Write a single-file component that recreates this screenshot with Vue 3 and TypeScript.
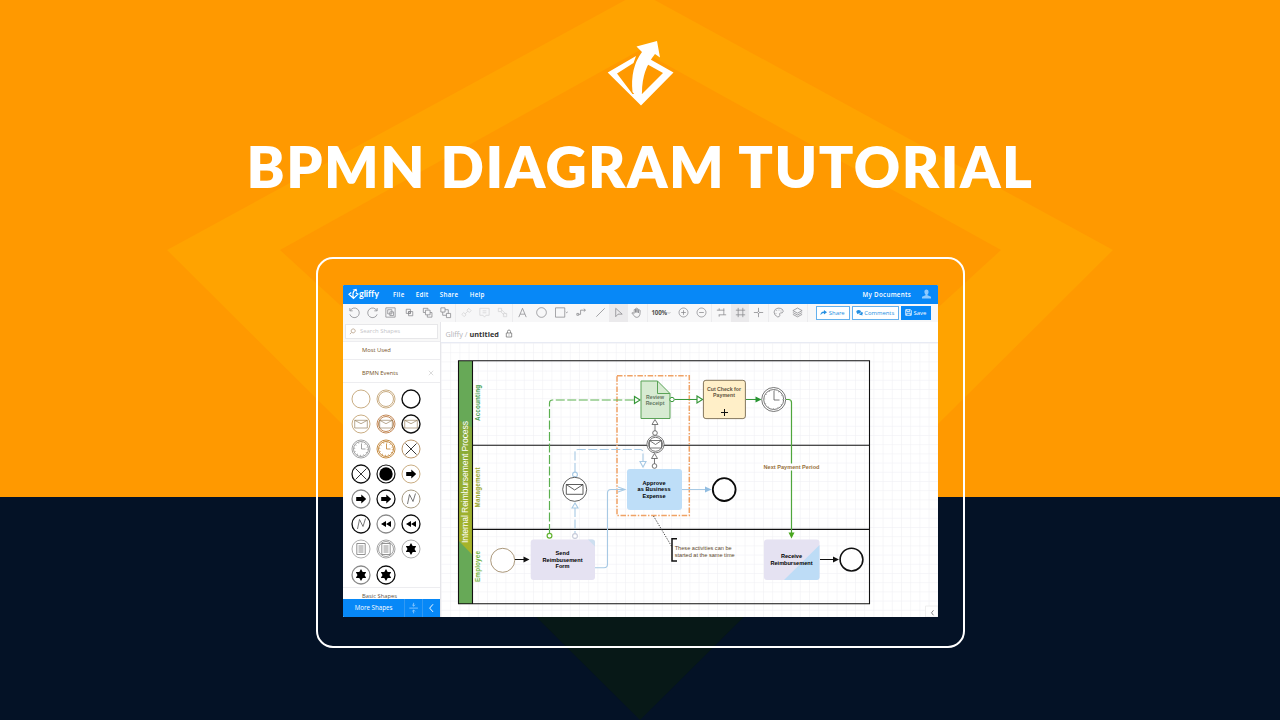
<script setup lang="ts">
interface Tool {
  name: string;
  path?: string;
  width?: number;
  faded?: boolean;
  active?: boolean;
  separator?: boolean;
  label?: string;
}

interface BpmnEvent {
  kind: string;
  color: string;
  weight: number;
  double?: boolean;
}

const menus = ['File', 'Edit', 'Share', 'Help']

const tools: Tool[] = [
  { name: 'undo', path: 'M2 2.200v3h3M2.300 5A5.200 5.200 0 1 1 2 9' },
  { name: 'redo', path: 'M12 2.200v3h-3M11.700 5A5.200 5.200 0 1 0 12 9' },
  { name: 'select', path: 'M2 2h10v10H2zM4 4h4.500v4.500H4zM6.300 6.300h4v4h-4z' },
  { name: 'group', path: 'M3.500 3.500h4.500v4.500H3.500zM6 6h4.500v4.500H6zM6 6h2v2H6z' },
  { name: 'front', path: 'M4.500 7H2.500V2.500h5V4M4.800 4.500h5v5h-5zM9.800 7h2v5h-5V9.500' },
  { name: 'back', path: 'M2 2h4.500v4.500H2zM8 8h4.500v4.500H8zM6.500 4h3.500v4M4 6.500v3.500H8' },
  { name: 'sep1', separator: true },
  { name: 'link', path: 'M2 9l2-2 2.500 2.500-2 2zM7.500 4.500l2-2L12 5l-2 2zM5.500 8.500l3-3', faded: true },
  { name: 'note', path: 'M2 2.500h10v7.500H8.500L7 12 5.500 10H2zM5 5.200h4M5 7.300h4', faded: true },
  { name: 'unlink', path: 'M2.500 2.500h3.500v3.500H2.500zM8 8h3.500v3.500H8zM5 6l4 4M6 4l5 5', faded: true },
  { name: 'sep2', separator: true },
  { name: 'text', path: 'M3 12L7 2.500 11 12M4.500 8.800h5', width: 18.4 },
  { name: 'ellipse', path: 'M7 1.800a5.200 5.200 0 1 0 .01 0z', width: 18.4 },
  { name: 'rect', path: 'M.5 2h10v10H.5zM11.700 6.300l1 1 1-1', width: 22 },
  { name: 'connector', path: 'M4 9h2V4.500h5M9.500 3l1.800 1.500L9.500 6M2 8h2v2H2z', width: 18.4 },
  { name: 'line', path: 'M2.500 11.500l9-9', width: 18.4 },
  { name: 'pointer', path: 'M4 2.500v9l2.500-2.700h4.500z', width: 18.4, active: true },
  { name: 'hand', path: 'M4.500 8V4q1-1 1.500 0v3V2.800q1-1 1.500 0V7 3.300q1-1 1.500 0V7.500l.500-3q1-.6 1.500.2L10.700 9Q10 12.300 7.500 12.300 5 12.300 4 10L2 7.500q.8-1 2.500.5' },
  { name: 'sep3', separator: true },
  { name: 'zoom', label: '100%', width: 26 },
  { name: 'zoom-in', path: 'M7 2.200a4.800 4.800 0 1 0 .01 0zM4.500 7h5M7 4.500v5' },
  { name: 'zoom-out', path: 'M7 2.200a4.800 4.800 0 1 0 .01 0zM4.500 7h5' },
  { name: 'sep4', separator: true },
  { name: 'guides', path: 'M2 4.500h8M4 9.500h8M4.500 2.500v2M9.500 2.500v7M4.500 9.500v2' },
  { name: 'grid', path: 'M2 4.500h10M2 9.500h10M4.500 2v10M9.500 2v10', active: true },
  { name: 'snap', path: 'M7 2v3.700M7 8.300V12M2 7h3.700M8.300 7H12M7 5.900a1.100 1.100 0 1 0 .01 0z' },
  { name: 'sep5', separator: true },
  { name: 'theme', path: 'M6.500 2.300Q12 2.300 12 6 11.500 8 9 7.500 7.500 8 8.500 10 8 12.200 6 11.700 2.200 10 2.200 6.500 2.800 2.800 6.500 2.300zM5 4.500v.8M7.500 4v.8M9.700 5v.8M4.300 7.500v.8' },
  { name: 'layers', path: 'M7 2.200L12 5 7 7.700 2 5zM2 7l5 2.700L12 7M2 9l5 2.700L12 9' },
  { name: 'sep6', separator: true },
]

const tan = '#b28a4e'
const gray = '#8b8b8b'
const black = '#111'

const events: BpmnEvent[] = [
  { kind: 'none', color: tan, weight: 0.7 },
  { kind: 'none', color: tan, weight: 0.7, double: true },
  { kind: 'none', color: black, weight: 1.4 },
  { kind: 'message', color: tan, weight: 0.7 },
  { kind: 'message', color: '#bd7d45', weight: 0.9, double: true },
  { kind: 'message', color: black, weight: 1.4 },
  { kind: 'timer', color: gray, weight: 0.8, double: true },
  { kind: 'timer', color: '#c0802f', weight: 0.9, double: true },
  { kind: 'cancel', color: '#a87c46', weight: 0.8 },
  { kind: 'cancel', color: black, weight: 1.3 },
  { kind: 'terminate', color: black, weight: 1.2 },
  { kind: 'link', color: tan, weight: 0.7 },
  { kind: 'link', color: gray, weight: 1.3 },
  { kind: 'link', color: black, weight: 1.3 },
  { kind: 'error', color: '#a79b82', weight: 1 },
  { kind: 'error', color: black, weight: 1.3 },
  { kind: 'rewind', color: gray, weight: 1.3 },
  { kind: 'rewind', color: black, weight: 1.3 },
  { kind: 'rule', color: gray, weight: 0.7 },
  { kind: 'rule', color: gray, weight: 0.8, double: true },
  { kind: 'multiple', color: gray, weight: 0.7 },
  { kind: 'multiple', color: gray, weight: 1.3 },
  { kind: 'multiple', color: black, weight: 1.3 },
]
</script>

<template>
  <main class="cover">
    <svg class="backdrop" viewBox="0 0 1280 720">
      <rect width="1280" height="720" fill="#ff9900" />
      <path d="M167 250L640-8l473 258-473 470zM280 250l360 330 361-330L640 50z" fill="#ffa300" fill-rule="evenodd" />
      <rect y="497" width="1280" height="223" fill="#041226" />
      <path d="M510 591h260L640 720z" fill="#071817" />
    </svg>

    <svg class="brand" viewBox="0 0 67 66">
      <path d="M29 16L.7 32.500 34 65.500 66.500 32.500 40 17.500l-2 5.500 18 10-21 21h-9.500L10 33.500 26.500 23z" fill="#fff" />
      <path d="M25.500 52Q23 28 35 12L29.500 6.500 50 1l3 16.500-5-3.500Q35 30 35 52l-1 10z" fill="#fff" />
    </svg>
    <h1>BPMN DIAGRAM TUTORIAL</h1>

    <div class="frame">
      <div class="app">
        <header class="menubar">
          <svg class="menu-logo" viewBox="0 0 11 12">
            <path d="M3.200 4.500L1 6.200l4.500 4.300L10 6.200 7.800 4.800M5.500 10Q4 5 6.500 2.500" />
            <path d="M4.500 1.800L8.500.8l.7 3z" class="solid" />
          </svg>
          <span class="wordmark">gliffy</span>
          <nav>
            <span v-for="menu in menus" :key="menu">{{ menu }}</span>
          </nav>
          <span class="documents">My Documents</span>
          <svg class="user" viewBox="0 0 10 10">
            <path d="M5 .5q2.300 0 2.100 2.500Q7 4.800 6 5.500v.8l3.500 1.500V9.500H.5V7.800L4 6.300v-.8Q3 4.800 2.900 3 2.700.5 5 .5z" />
          </svg>
        </header>

        <div class="toolbar">
          <template v-for="tool in tools" :key="tool.name">
            <i v-if="tool.separator" class="separator" />
            <span
              v-else
              class="tool"
              :class="{ faded: tool.faded, active: tool.active }"
              :style="{ width: `${tool.width ?? 18.2}px` }"
            >
              <template v-if="tool.label">
                <b>{{ tool.label }}</b>
                <svg class="caret" viewBox="0 0 4 4"><path d="M.5 1L2 2.500 3.500 1" /></svg>
              </template>
              <svg v-else class="tool-icon" viewBox="0 0 14 14"><path :d="tool.path" /></svg>
            </span>
          </template>
          <div class="actions">
            <span class="button share">
              <svg viewBox="0 0 8 8"><path d="M.5 7Q.5 3 4.500 2.800V1L8 3.800 4.500 6.200V4.600Q2 4.600.5 7z" /></svg>
              Share
            </span>
            <span class="button comments">
              <svg viewBox="0 0 8 8"><path d="M3 1q2.700 0 2.700 2T3 5L1 6l.5-1.500Q.2 4 .3 3 .4 1 3 1zM6.300 3.200Q8 3.600 7.800 5q-.1.8-.7 1.200L7.500 7.500 5.800 6.800Q4 6.900 3.500 5.800 6.300 5.500 6.300 3.200z" /></svg>
              Comments
            </span>
            <span class="button save">
              <svg viewBox="0 0 8 8"><path d="M.8.8h5.400l1 1v5.400H.8zM2 .8v2h3.500v-2M2 7V4.800h4V7" fill="none" stroke="currentColor" stroke-width=".9" /></svg>
              Save
            </span>
          </div>
        </div>

        <div class="workspace">
          <aside class="sidebar">
            <div class="search">
              <div class="search-box">
                <svg viewBox="0 0 8 8"><path d="M4.800 1a2.300 2.300 0 1 0 .01 0zM3 5L1 7" /></svg>
                Search Shapes
              </div>
            </div>
            <div class="section">Most Used</div>
            <div class="section second">
              BPMN Events
              <svg viewBox="0 0 6 6"><path d="M.8.8l4.400 4.400M5.200.8L.8 5.200" /></svg>
            </div>
            <div class="palette">
              <svg v-for="(event, index) in events" :key="index" viewBox="-10 -10 20 20">
                <circle r="9" fill="#fff" :stroke="event.color" :stroke-width="event.weight" />
                <circle v-if="event.double" r="7.500" fill="none" :stroke="event.color" :stroke-width="event.weight" />
                <g v-if="event.kind === 'message'" fill="none" stroke="#8a7048" stroke-width=".6">
                  <path d="M-6.300-3.700H6.300V4H-6.300zM-6.300-3.700L0-.3l6.300-3.400" />
                </g>
                <g v-else-if="event.kind === 'timer'" fill="none" :stroke="event.color" stroke-width=".8">
                  <path d="M.5-5.500V0H4.500" />
                  <circle r="6.400" stroke-width="1.200" stroke-dasharray=".6 2.750" />
                </g>
                <path v-else-if="event.kind === 'cancel'" d="M-5.500-5.500l11 11M5.500-5.500l-11 11" stroke="#222" stroke-width=".9" />
                <circle v-else-if="event.kind === 'terminate'" r="6.700" fill="#000" />
                <path v-else-if="event.kind === 'link'" d="M-4.800-2H.3V-4.500L5.200 0 .3 4.500V2h-5.100z" fill="#000" />
                <path v-else-if="event.kind === 'error'" d="M-3.500 5L-1.500-4.500 2 2.500 4.500-5.500" fill="none" stroke="#555" stroke-width=".8" />
                <path v-else-if="event.kind === 'rewind'" d="M-5 0l5-3v6zM0 0l5-3v6z" fill="#000" />
                <path v-else-if="event.kind === 'rule'" d="M-4.200-5.500h8.400v11h-8.400zM-2.500-3h5M-2.500-1h5M-2.500 1h5M-2.500 3h5" fill="none" stroke="#777" stroke-width=".8" />
                <path v-else-if="event.kind === 'multiple'" d="M0-6l1.700 3H5.200L3.500 0l1.700 3H1.700L0 6l-1.700-3h-3.500L-3.500 0l-1.700-3h3.500z" fill="#000" />
              </svg>
            </div>
            <div class="section cropped">Basic Shapes</div>
            <div class="more">
              <span class="more-label">More Shapes</span>
              <svg class="more-split" viewBox="0 0 18 18"><path d="M4.500 9h9M9 3.500V7M9 11v3.500M7.500 5.500L9 7l1.500-1.500M7.500 12.500L9 11l1.500 1.500" /></svg>
              <svg class="more-close" viewBox="0 0 18 18"><path d="M10.500 5L7 9l3.500 4" /></svg>
            </div>
          </aside>

          <section class="document">
            <div class="doc-title">
              <span>Gliffy /</span>
              <b>untitled</b>
              <svg viewBox="0 0 8 9"><path d="M1.300 4h5.400v4H1.300zM2.500 4V2.500Q2.500 1 4 1t1.500 1.500V4M4 5.500v1" /></svg>
            </div>

            <svg class="canvas" viewBox="441 343 497 274">
              <defs>
                <pattern id="grid" width="9.200" height="9.200" x="441" y="343" patternUnits="userSpaceOnUse">
                  <path d="M0 0v9.200M0 0h9.200" stroke="#eeeef3" stroke-width="1" />
                </pattern>
                <linearGradient id="lane" x1="0" y1="0" x2="0" y2="1">
                  <stop offset="0" stop-color="#83a93d" />
                  <stop offset="1" stop-color="#a9b428" />
                </linearGradient>
              </defs>
              <rect x="441" y="343" width="497" height="274" fill="url(#grid)" />

              <!-- pool and lanes -->
              <rect x="459" y="361" width="13.500" height="243" fill="#67a957" />
              <path d="M459 420l13.500 8v127L459 541z" fill="url(#lane)" />
              <g fill="none" stroke="#111" stroke-width="1.100">
                <path d="M458.500 360.700h411v243.100h-411zM472.500 360.700v243.100M472.500 445.300h397M472.500 529.400h397" />
              </g>
              <text class="pool" transform="translate(467.500 482) rotate(-90)" textLength="122">Internal Reimbursement Process</text>
              <g class="lane">
                <text transform="translate(479.500 403) rotate(-90)" textLength="36" fill="#46a052">Accounting</text>
                <text transform="translate(479.500 487.500) rotate(-90)" textLength="40" fill="#9ba82f">Management</text>
                <text transform="translate(479.500 566.500) rotate(-90)" textLength="31" fill="#72b43b">Employee</text>
              </g>

              <!-- group around the review steps -->
              <rect x="617" y="375.700" width="72.300" height="139.800" fill="none" stroke="#f0a265" stroke-width="1.500" stroke-dasharray="5.500 1.600 1.500 1.600" />

              <!-- green flow -->
              <g fill="none" stroke="#38983a" stroke-width="1.200">
                <path d="M549.500 533V403q0-3 3-3H634" stroke="#5bb04f" stroke-dasharray="9 2.500" />
                <path d="M634.500 396.500l5.500 3.500-5.500 3.500z" fill="#fff" />
                <circle cx="549.500" cy="535.800" r="2.400" stroke="#62b32f" fill="#fff" />
                <path d="M674.500 399.500H697M746 399.500h11" />
                <path d="M697 396l5.500 3.500-5.500 3.500z" fill="#fff" />
                <path d="M786 399.500h2.500q3 0 3 3V534" stroke="#4fa63c" />
              </g>
              <path d="M755.500 396.500l6 3-6 3z" fill="#279431" />
              <path d="M788.500 532.500h6l-3 6z" fill="#4aa71f" />

              <!-- blue flow -->
              <g fill="none" stroke="#a7c9e4" stroke-width="1.100">
                <path d="M575 472v-19.500q0-3 3-3h62q3 0 3 3V461M575 508v25" stroke-dasharray="9 2.500" />
                <path d="M640 461.500h6l-3 5.500zM575 503l-3 5h6z" fill="#fff" />
                <circle cx="575" cy="474.500" r="2.400" fill="#fff" />
                <circle cx="575" cy="536" r="2.400" stroke="#c5c9d8" fill="#fff" />
                <path d="M595 567.700h9q3.500 0 3.500-3.500V493q0-3.500 3.500-3.500h14M682 489.500h24" />
                <path d="M618 487l7 2.500-7 2.500" />
              </g>
              <path d="M705 486.500l6.500 3-6.500 3z" fill="#91bde1" />

              <!-- nodes -->
              <path d="M641 381h16.500l12.500 12.500v25H641z" fill="#d7ebd2" stroke="#5aa357" />
              <path d="M657.500 381v12.500H670" fill="none" stroke="#5aa357" />
              <circle cx="672" cy="399.500" r="2.200" fill="#fff" stroke="#38983a" />
              <rect x="703.400" y="380.300" width="42" height="38.300" rx="2.500" fill="#ffefc8" stroke="#65553a" stroke-width=".8" />
              <path d="M724.500 409v7M721 412.500h7" stroke="#111" stroke-width="1" />
              <rect x="627" y="469" width="55" height="41" rx="3" fill="#bedef8" />
              <rect x="530.700" y="539.500" width="64.300" height="40.500" rx="3" fill="#e5e2f2" />
              <path d="M588 539.500h4q3 0 3 3v4z" fill="#cddff0" />
              <rect x="764" y="539.500" width="55.500" height="40.500" rx="3" fill="#e5e2f2" />
              <path d="M784 580l35.500-35v32q0 3-3 3z" fill="#bddcf6" />

              <g fill="#fff" stroke="#555" stroke-width=".8">
                <circle cx="773.700" cy="399.500" r="12" />
                <circle cx="773.700" cy="399.500" r="10" />
                <circle cx="773.700" cy="399.500" r="9" stroke-dasharray=".7 4" />
                <path d="M774 391v9h5.500" fill="none" />
                <path d="M655 431v-6M654.500 464v-6" />
                <path d="M655 419.500l-3 5h6zM654.500 453.500l-3 5h6z" />
                <circle cx="655" cy="433" r="2.300" />
                <circle cx="654.500" cy="466" r="2.300" />
                <circle cx="655.500" cy="444.300" r="8.600" />
                <circle cx="655.500" cy="444.300" r="7" />
                <path d="M649.500 440.500h12v7.500h-12zM649.500 440.500l6 4 6-4" />
                <circle cx="574.700" cy="489.300" r="12" stroke="#333" />
                <path d="M566.300 484.500H583v9.800h-16.700zM566.300 484.500l8.350 5.500 8.350-5.500" stroke="#333" />
                <circle cx="502.700" cy="560.300" r="12" stroke="#947c58" />
                <circle cx="724.200" cy="489.600" r="11.400" stroke="#0a0a0a" stroke-width="1.800" />
                <circle cx="851.500" cy="559.600" r="11.400" stroke="#111" stroke-width="1.600" />
              </g>
              <path d="M515 559.500h10M820 559.500h14" stroke="#111" stroke-width="1.100" />
              <path d="M523.500 556.500l6 3-6 3zM833 556.500l6 3-6 3z" fill="#111" />

              <!-- annotation -->
              <path d="M653.500 516l18.500 31" stroke="#333" stroke-width=".9" stroke-dasharray="1.300 1.300" />
              <path d="M677 538.800h-5v22.300h5" fill="none" stroke="#111" stroke-width="1.500" />

              <g class="node-text">
                <text x="655" y="399" class="muted">Review</text>
                <text x="655" y="405.200" class="muted">Receipt</text>
                <text x="724" y="391" class="brown" textLength="34">Cut Check for</text>
                <text x="724" y="397" class="brown" textLength="22">Payment</text>
                <text x="654" y="485" textLength="23">Approve</text>
                <text x="654" y="491.300" textLength="33">as Business</text>
                <text x="654" y="497.800" textLength="23">Expense</text>
                <text x="562.500" y="555" textLength="14">Send</text>
                <text x="562.500" y="561.500" textLength="40">Reimbusement</text>
                <text x="562.500" y="568" textLength="14">Form</text>
                <text x="791.500" y="558.200" textLength="21">Receive</text>
                <text x="791.500" y="564.700" textLength="42">Reimbursement</text>
                <rect x="763" y="463.500" width="57" height="7" fill="#fff" />
                <text x="791.500" y="469" class="period" textLength="56">Next Payment Period</text>
              </g>
              <g class="note">
                <text x="674.700" y="550" textLength="57">These activities can be</text>
                <text x="674.700" y="556.500" textLength="60">started at the same time</text>
              </g>
              <path d="M925.500 617v-11H938v11z" fill="#fff" stroke="#eee" />
              <path d="M933.500 610.300l-2 2.500 2 2.500" fill="none" stroke="#666" stroke-width=".8" />
            </svg>
          </section>
        </div>
      </div>
    </div>
  </main>
</template>

<style>
body {
  overflow: hidden;
}
</style>

<style scoped>
.cover {
  position: relative;
  display: flex;
  flex-direction: column;
  align-items: center;
  width: 1280px;
  height: 720px;
  padding-top: 40px;
  box-sizing: border-box;
  overflow: hidden;
  font-family: "Open Sans", sans-serif;
}

.backdrop {
  position: absolute;
  inset: 0;
  width: 1280px;
  height: 720px;
}

.brand {
  position: relative;
  width: 67px;
  height: 66px;
}

h1 {
  position: relative;
  height: 80px;
  margin: 20px 0 51px;
  color: #fff;
  font: 800 57px/80px Lato, sans-serif;
  letter-spacing: 1.5px;
  white-space: nowrap;
}

.frame {
  position: relative;
  flex: none;
  width: 649px;
  height: 391px;
  padding: 26px 25px;
  margin-left: 1px;
  border: 2px solid #fff;
  border-radius: 17px;
  box-sizing: border-box;
}

.app {
  display: flex;
  flex-direction: column;
  width: 595px;
  height: 332px;
  border-radius: 1px;
  overflow: hidden;
  background: #fff;
}

.menubar {
  display: flex;
  align-items: center;
  flex: none;
  height: 18.5px;
  padding: 0 6px 0 5px;
  box-sizing: border-box;
  background: #0788f7;
  color: #fff;
  font-size: 6.2px;
  font-weight: 600;
  letter-spacing: 0.3px;
}

.menu-logo {
  width: 11px;
  height: 12px;
  fill: none;
  stroke: #fff;
  stroke-width: 1.2;
}

.menu-logo .solid {
  fill: #fff;
  stroke: none;
}

.wordmark {
  width: 34px;
  font: 700 9px/12px Lato, sans-serif;
  letter-spacing: -0.1px;
}

.menubar nav {
  display: flex;
  gap: 11.3px;
}

.documents {
  margin-left: auto;
}

.user {
  width: 11px;
  height: 10px;
  margin-left: 10px;
  fill: #8dcaff;
}

.toolbar {
  display: flex;
  align-items: center;
  flex: none;
  height: 18.5px;
  padding: 0 7px 0 2.5px;
  box-sizing: border-box;
  background: #f7f7f8;
}

.separator {
  flex: none;
  width: 0.8px;
  height: 18px;
  margin: 0 0.75px;
  background: #ececee;
}

.tool {
  display: flex;
  flex: none;
  align-items: center;
  justify-content: center;
  height: 18.5px;
  color: #555;
  font-size: 6.2px;
  letter-spacing: -0.2px;
}

.tool.active {
  background: #ebeaec;
}

.tool.faded {
  opacity: 0.3;
}

.tool-icon {
  width: 13px;
  height: 13px;
  fill: none;
  stroke: #858589;
  stroke-width: 0.8;
}

.caret {
  width: 4px;
  height: 4px;
  fill: none;
  stroke: #aaa;
  stroke-width: 0.7;
}

.actions {
  display: flex;
  gap: 2px;
  margin-left: auto;
}

.button {
  display: flex;
  align-items: center;
  justify-content: center;
  gap: 1.5px;
  height: 13.5px;
  border: 1px solid #63b1ee;
  box-sizing: border-box;
  background: #fff;
  color: #258fe2;
  font-size: 5.9px;
}

.button svg {
  width: 7px;
  height: 7px;
  fill: currentColor;
}

.share {
  width: 34px;
}

.comments {
  width: 47px;
}

.save {
  width: 30.5px;
  border-color: #0788f7;
  background: #0788f7;
  color: #fff;
}

.workspace {
  display: flex;
  flex: 1;
  min-height: 0;
}

.sidebar {
  display: flex;
  flex-direction: column;
  width: 97.5px;
  box-sizing: border-box;
  background: #fff;
}

.search {
  flex: none;
  height: 19px;
  padding: 2px 2px 2px 2px;
  box-sizing: border-box;
  background: #f8f8f8;
}

.search-box {
  display: flex;
  align-items: center;
  gap: 4px;
  height: 14.5px;
  padding-left: 3px;
  border: 1px solid #e7e7e9;
  box-sizing: border-box;
  background: #fff;
  color: #c5c5c9;
  font-size: 5.9px;
}

.search-box svg {
  width: 7px;
  height: 7px;
  fill: none;
  stroke: #b69f86;
  stroke-width: 0.9;
}

.section {
  display: flex;
  align-items: center;
  flex: none;
  height: 18.5px;
  padding: 0 6px 0 19px;
  border: solid #ededf0;
  border-width: 1px 0;
  box-sizing: border-box;
  color: #755328;
  font-size: 5.8px;
}

.section.second {
  height: 23.5px;
  padding-top: 4px;
  border-top: 0;
}

.section svg {
  width: 6px;
  height: 6px;
  margin-left: auto;
  stroke: #ccc;
  stroke-width: 0.7;
}

.palette {
  display: grid;
  grid-template-columns: repeat(3, 25px);
  grid-auto-rows: 25.15px;
  place-items: center;
  height: 203.5px;
  padding: 3px 0 0 5.5px;
  box-sizing: border-box;
}

.palette svg {
  width: 20px;
  height: 20px;
}

.section.cropped {
  height: 12px;
  padding-top: 6px;
  border-bottom: 0;
  color: #5d5346;
  line-height: 6px;
}

.more {
  position: relative;
  display: flex;
  flex: none;
  align-items: center;
  height: 18.5px;
  background: #0788f7;
  color: #fff;
  font-size: 6.2px;
}

.more-label {
  width: 61px;
  text-align: center;
}

.more svg {
  width: 18.2px;
  height: 18.2px;
  border-left: 0.8px solid #3199f3;
  box-sizing: border-box;
  fill: none;
  stroke: #fff;
}

.more .more-split {
  stroke: #9fd1ff;
  stroke-width: 0.8;
}

.document {
  display: flex;
  flex: 1;
  flex-direction: column;
  border-left: 0.5px solid #e6e6ea;
}

.doc-title {
  display: flex;
  align-items: center;
  flex: none;
  gap: 2px;
  height: 21px;
  padding: 3px 0 0 4px;
  border-bottom: 1px solid #e8ebf4;
  box-sizing: border-box;
  color: #b4b4b8;
  font-size: 7.3px;
}

.doc-title b {
  color: #333;
}

.doc-title svg {
  width: 8px;
  height: 9px;
  margin-left: 4px;
  fill: none;
  stroke: #777;
  stroke-width: 0.8;
}

.canvas {
  display: block;
  width: 497px;
  height: 274px;
}

.canvas text {
  font-family: "Liberation Sans", Arial, sans-serif;
  text-anchor: middle;
}

.canvas .pool {
  fill: #fff;
  font-size: 8.6px;
}

.canvas .lane text {
  font-size: 6.3px;
  font-weight: 700;
}

.canvas .node-text text {
  font-size: 5.6px;
  font-weight: 700;
}

.canvas .node-text .muted {
  fill: #647862;
  font-size: 5.2px;
}

.canvas .node-text .brown {
  fill: #625540;
  font-size: 5.2px;
}

.canvas .node-text .period {
  fill: #98713d;
}

.canvas .note text {
  fill: #5c472b;
  font-size: 5.6px;
  text-anchor: start;
}
</style>
